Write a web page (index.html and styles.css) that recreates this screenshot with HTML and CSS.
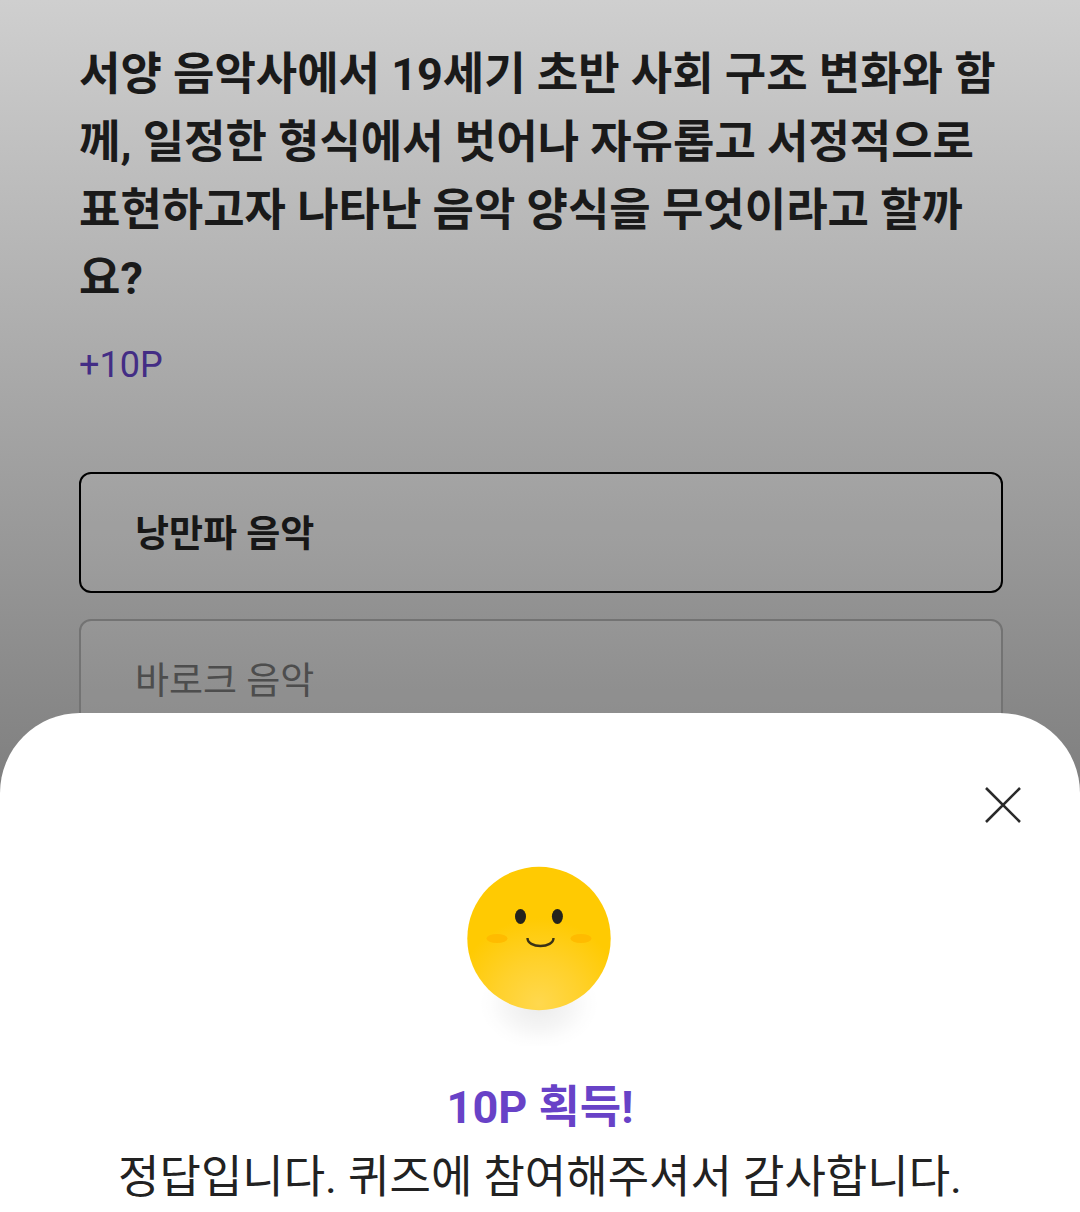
FILE: index.html
```html
<!DOCTYPE html>
<html lang="ko">
<head>
<meta charset="utf-8">
<meta name="viewport" content="width=device-width, initial-scale=1">
<title>음악 퀴즈</title>
<link rel="stylesheet" href="styles.css">
</head>
<body>
<main class="quiz">
  <h1 class="question">서양 음악사에서 19세기 초반 사회 구조 변화와 함께, 일정한 형식에서 벗어나 자유롭고 서정적으로 표현하고자 나타난 음악 양식을 무엇이라고 할까요?</h1>
  <p class="points">+10P</p>
  <div class="answers">
    <button type="button" class="answer answer-selected">낭만파 음악</button>
    <button type="button" class="answer">바로크 음악</button>
  </div>
</main>
<section class="sheet" role="dialog" aria-labelledby="result-title">
  <button type="button" class="close" aria-label="닫기">
    <svg width="36" height="36" viewBox="0 0 36 36" fill="none" stroke="#2a2a2a" stroke-width="2.6"><path d="M1 1 35 35M35 1 1 35"/></svg>
  </button>
  <svg class="face" width="180" height="190" viewBox="0 0 180 190" aria-hidden="true">
    <defs>
      <radialGradient id="skin" gradientUnits="userSpaceOnUse" cx="89" cy="148" r="86"><stop offset="0" stop-color="#ffd84e"/><stop offset=".5" stop-color="#ffd12b"/><stop offset="1" stop-color="#ffca02"/></radialGradient>
      <radialGradient id="shade"><stop offset="0" stop-color="#000" stop-opacity=".08"/><stop offset=".5" stop-color="#000" stop-opacity=".04"/><stop offset=".8" stop-color="#000" stop-opacity=".01"/><stop offset="1" stop-color="#000" stop-opacity="0"/></radialGradient>
    </defs>
    <ellipse cx="89" cy="148" rx="60" ry="46" fill="url(#shade)"/>
    <circle cx="89" cy="82.500" r="71.700" fill="url(#skin)"/>
    <ellipse cx="70.500" cy="60.500" rx="5.500" ry="7.500" fill="#24231c"/>
    <ellipse cx="107.400" cy="60.500" rx="5.500" ry="7.500" fill="#24231c"/>
    <ellipse cx="47" cy="82.500" rx="10.500" ry="4.500" fill="#ffbb00"/>
    <ellipse cx="131" cy="82.500" rx="10.500" ry="4.500" fill="#ffbb00"/>
    <path d="M77.500 82c0 5 6 8 13 8s13-3 13-8" fill="none" stroke="#3a3216" stroke-width="2.400"/>
  </svg>
  <h2 class="result" id="result-title">10P 획득!</h2>
  <p class="message">정답입니다. 퀴즈에 참여해주셔서 감사합니다.</p>
</section>
</body>
</html>
```
FILE: styles.css
```css
* {
  box-sizing: border-box;
}

body {
  margin: 0;
  min-height: 100vh;
  display: flex;
  flex-direction: column;
  overflow-x: hidden;
  background: linear-gradient(#cfcfcf, #808080 780px);
  font-family: Roboto, "Noto Sans CJK KR", sans-serif;
  color: #1a1a1a;
}

.quiz {
  padding: 41px 77px 0 79px;
}

.question {
  margin: 0;
  font-size: 45px;
  line-height: 68px;
  font-weight: 700;
  word-break: break-all;
}

.points {
  margin: 28px 0 0;
  font-size: 36px;
  line-height: 48px;
  color: #432d85;
}

.answers {
  margin-top: 83px;
  display: grid;
  gap: 26px;
}

.answer {
  height: 121px;
  padding: 4px 54px 0;
  border: 2px solid #737373;
  border-radius: 12px;
  background: rgba(255, 255, 255, 0.06);
  font: 400 37px/54px Roboto, "Noto Sans CJK KR", sans-serif;
  color: #4d4d4d;
  text-align: left;
}

.answer-selected {
  border-color: #000;
  font-weight: 700;
  color: #171717;
}

.sheet {
  position: relative;
  flex: 1;
  margin-top: -27px;
  padding: 74px 0 0;
  display: flex;
  flex-direction: column;
  align-items: center;
  border-radius: 80px 80px 0 0;
  background: #fff;
}

.close {
  align-self: flex-end;
  display: flex;
  margin-right: 59px;
  padding: 0;
  border: 0;
  background: none;
}

.face {
  margin-top: 33px;
}

.result {
  margin: 28px 0 0;
  font-size: 45px;
  line-height: 68px;
  font-weight: 700;
  color: #6842c7;
}

.message {
  margin: 2px 0 0;
  font-size: 45px;
  line-height: 68px;
  color: #222;
}
```
